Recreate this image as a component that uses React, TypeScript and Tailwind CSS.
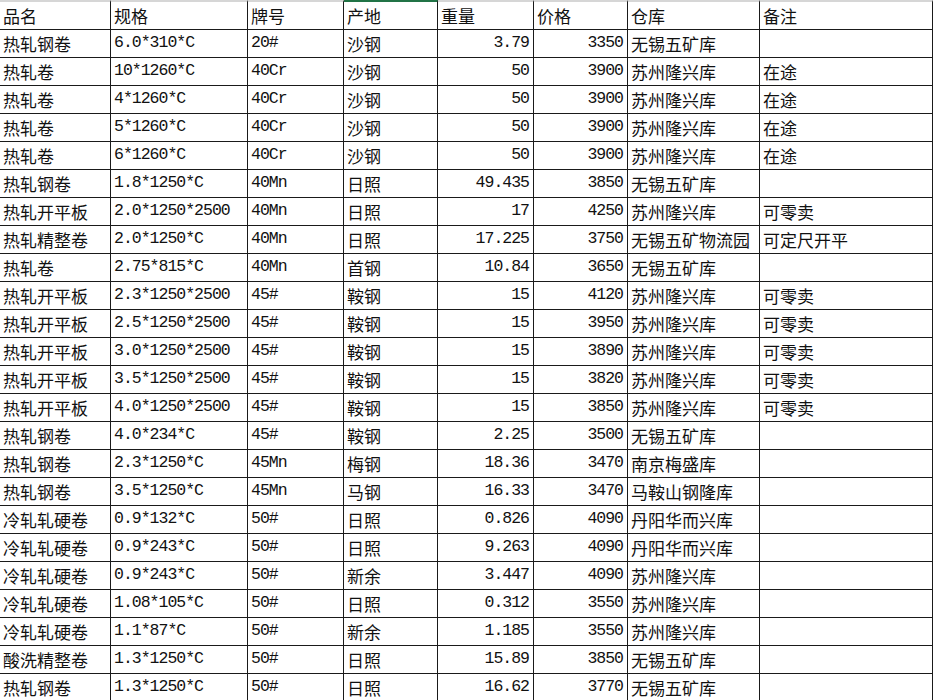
import React from "react";

const header = ["品名", "规格", "牌号", "产地", "重量", "价格", "仓库", "备注"];

const rows: string[][] = [
  ["热轧钢卷", "6.0*310*C", "20#", "沙钢", "3.79", "3350", "无锡五矿库", ""],
  ["热轧卷", "10*1260*C", "40Cr", "沙钢", "50", "3900", "苏州隆兴库", "在途"],
  ["热轧卷", "4*1260*C", "40Cr", "沙钢", "50", "3900", "苏州隆兴库", "在途"],
  ["热轧卷", "5*1260*C", "40Cr", "沙钢", "50", "3900", "苏州隆兴库", "在途"],
  ["热轧卷", "6*1260*C", "40Cr", "沙钢", "50", "3900", "苏州隆兴库", "在途"],
  ["热轧钢卷", "1.8*1250*C", "40Mn", "日照", "49.435", "3850", "无锡五矿库", ""],
  ["热轧开平板", "2.0*1250*2500", "40Mn", "日照", "17", "4250", "苏州隆兴库", "可零卖"],
  ["热轧精整卷", "2.0*1250*C", "40Mn", "日照", "17.225", "3750", "无锡五矿物流园", "可定尺开平"],
  ["热轧卷", "2.75*815*C", "40Mn", "首钢", "10.84", "3650", "无锡五矿库", ""],
  ["热轧开平板", "2.3*1250*2500", "45#", "鞍钢", "15", "4120", "苏州隆兴库", "可零卖"],
  ["热轧开平板", "2.5*1250*2500", "45#", "鞍钢", "15", "3950", "苏州隆兴库", "可零卖"],
  ["热轧开平板", "3.0*1250*2500", "45#", "鞍钢", "15", "3890", "苏州隆兴库", "可零卖"],
  ["热轧开平板", "3.5*1250*2500", "45#", "鞍钢", "15", "3820", "苏州隆兴库", "可零卖"],
  ["热轧开平板", "4.0*1250*2500", "45#", "鞍钢", "15", "3850", "苏州隆兴库", "可零卖"],
  ["热轧钢卷", "4.0*234*C", "45#", "鞍钢", "2.25", "3500", "无锡五矿库", ""],
  ["热轧钢卷", "2.3*1250*C", "45Mn", "梅钢", "18.36", "3470", "南京梅盛库", ""],
  ["热轧钢卷", "3.5*1250*C", "45Mn", "马钢", "16.33", "3470", "马鞍山钢隆库", ""],
  ["冷轧轧硬卷", "0.9*132*C", "50#", "日照", "0.826", "4090", "丹阳华而兴库", ""],
  ["冷轧轧硬卷", "0.9*243*C", "50#", "日照", "9.263", "4090", "丹阳华而兴库", ""],
  ["冷轧轧硬卷", "0.9*243*C", "50#", "新余", "3.447", "4090", "苏州隆兴库", ""],
  ["冷轧轧硬卷", "1.08*105*C", "50#", "日照", "0.312", "3550", "苏州隆兴库", ""],
  ["冷轧轧硬卷", "1.1*87*C", "50#", "新余", "1.185", "3550", "苏州隆兴库", ""],
  ["酸洗精整卷", "1.3*1250*C", "50#", "日照", "15.89", "3850", "无锡五矿库", ""],
  ["热轧钢卷", "1.3*1250*C", "50#", "日照", "16.62", "3770", "无锡五矿库", ""],
];

function Text({ s }: { s: string }) {
  const parts = s.split(/([\x00-\x7f]+)/).filter((p) => p.length > 0);
  return (
    <>
      {parts.map((p, i) =>
        /^[\x00-\x7f]+$/.test(p) ? (
          <span
            key={i}
            className="font-['Liberation_Mono',monospace] text-[16.5px] tracking-[-1px] leading-none text-[#111]"
          >
            {p}
          </span>
        ) : (
          <span key={i} className="font-['Noto_Sans_CJK_SC',sans-serif] text-[17px] leading-none text-[#111]">
            {p}
          </span>
        )
      )}
    </>
  );
}

export default function App() {
  return (
    <div className="w-[933px] h-[700px] overflow-hidden bg-white text-black">
      <div className="grid grid-cols-[111px_137px_96px_94px_96px_94px_132px_173px]">
        {header.map((h, i) => (
          <div
            key={"h" + i}
            className={
              "h-[30px] border-r border-b border-r-[#1a1a1a] border-b-[#1a1a1a] border-t-2 flex items-center px-[3px] whitespace-nowrap overflow-hidden " +
              (i === 3 ? "border-t-[#217346]" : "border-t-[#d6d6d6]")
            }
          >
            <Text s={h} />
          </div>
        ))}
        {rows.map((r, ri) =>
          r.map((c, ci) => (
            <div
              key={ri + "-" + ci}
              className={
                "h-[28px] border-r border-b border-[#1a1a1a] flex items-center px-[3px] whitespace-nowrap overflow-hidden " +
                (ci === 4 || ci === 5 ? "justify-end pr-[4px]" : "justify-start")
              }
            >
              <Text s={c} />
            </div>
          ))
        )}
      </div>
    </div>
  );
}
